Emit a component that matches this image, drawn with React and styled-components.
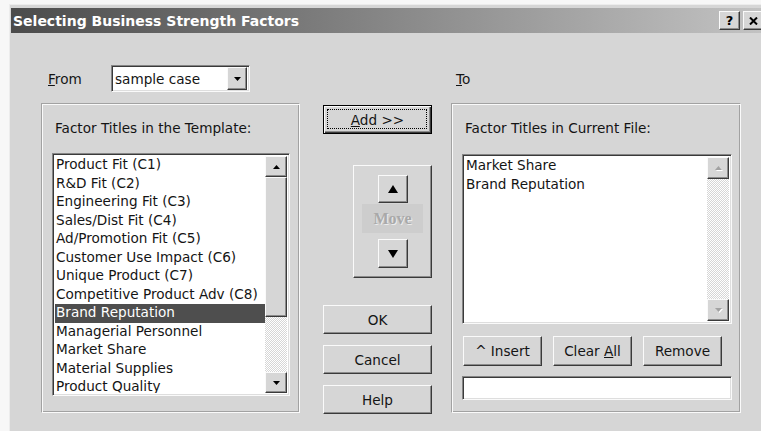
import React from "react";
import styled, { createGlobalStyle, css } from "styled-components";

const FACE = "#d6d6d6";

const GlobalStyle = createGlobalStyle`
  html, body {
    margin: 0;
    padding: 0;
    background: #f7f7f7;
    overflow: hidden;
  }
  body {
    font-family: "DejaVu Sans", Tahoma, sans-serif;
    font-size: 13.6px;
    color: #141414;
  }
  *, *::before, *::after {
    box-sizing: border-box;
  }
`;

const raised = css`
  border: 1px solid;
  border-color: #fafafa #3a3a3a #3a3a3a #fafafa;
  box-shadow: inset -1px -1px 0 #8c8c8c;
`;

const sunken = css`
  border: 1px solid;
  border-color: #858585 #fafafa #fafafa #858585;
  box-shadow: inset 1px 1px 0 #3a3a3a, inset -1px -1px 0 #dedede;
`;

const Arrow = ({ up, w = 7, h = 4, disabled }) => (
  <svg
    width={w}
    height={h}
    viewBox={`0 0 ${w} ${h}`}
    style={disabled ? { filter: "drop-shadow(1px 1px 0 #fff)" } : undefined}
  >
    <polygon
      points={up ? `0,${h} ${w / 2},0 ${w},${h}` : `0,0 ${w},0 ${w / 2},${h}`}
      fill={disabled ? "#a2a2a2" : "#000"}
    />
  </svg>
);

const Window = styled.div`
  margin: 4px 0 0 9px;
  width: 762px;
  height: 427px;
  background: ${FACE};
  border-top: 1px solid #ececec;
  border-left: 1px solid #ececec;
  padding: 3px 0 0 1px;
`;

const TitleBar = styled.div`
  height: 25px;
  display: flex;
  align-items: center;
  padding: 0 7px 0 2px;
  background: linear-gradient(to right, #4b4b4b, #c4c4c4);
`;

const Title = styled.div`
  flex: 1;
  color: #fff;
  font-weight: bold;
  font-size: 14px;
  white-space: nowrap;
`;

const CaptionButtons = styled.div`
  display: flex;
  gap: 3px;
`;

const CaptionButton = styled.div`
  ${raised};
  width: 21px;
  height: 19px;
  background: ${FACE};
  display: grid;
  place-items: center;
  font-weight: bold;
  font-size: 13px;
  color: #000;
`;

const Body = styled.div`
  padding: 32px 0 0 30px;
`;

const TopRow = styled.div`
  display: flex;
  align-items: center;
  height: 27px;
  margin-bottom: 11px;
`;

const FromField = styled.div`
  width: 415px;
  display: flex;
  align-items: center;
  padding-left: 7px;
`;

const Label = styled.span`
  width: ${(p) => (p.$width ? `${p.$width}px` : "auto")};
`;

const Combo = styled.div`
  ${sunken};
  width: 139px;
  height: 27px;
  background: #fff;
  display: flex;
  align-items: center;
  padding: 2px 2px 2px 3px;
`;

const ComboText = styled.span`
  flex: 1;
`;

const DropButton = styled.div`
  ${raised};
  width: 20px;
  height: 23px;
  background: ${FACE};
  display: grid;
  place-items: center;
`;

const MainRow = styled.div`
  display: flex;
  align-items: flex-start;
`;

const GroupBox = styled.div`
  width: ${(p) => p.$width}px;
  height: 310px;
  margin-left: ${(p) => p.$gap || 0}px;
  border: 1px solid;
  border-color: #a2a2a2 #fafafa #fafafa #a2a2a2;
  box-shadow: inset 1px 1px 0 #fafafa, inset -1px -1px 0 #a2a2a2;
  padding: 16px 0 0 10px;
`;

const GroupTitle = styled.div`
  height: 17px;
  line-height: 17px;
  padding-left: 3px;
  margin-bottom: ${(p) => p.$space}px;
  white-space: nowrap;
`;

const ListBox = styled.div`
  ${sunken};
  width: ${(p) => p.$width}px;
  height: ${(p) => p.$height}px;
  background: #fff;
  padding: 2px;
  display: flex;
`;

const Items = styled.div`
  flex: 1;
  overflow: hidden;
`;

const Item = styled.div`
  height: 18.5px;
  line-height: 16.5px;
  padding-left: 1px;
  white-space: nowrap;
  ${(p) =>
    p.$selected &&
    css`
      background: #4e4e4e;
      color: #fff;
    `}
`;

const ScrollBar = styled.div`
  width: 22px;
  display: flex;
  flex-direction: column;
`;

const ScrollButton = styled.div`
  ${raised};
  height: ${(p) => p.$size}px;
  background: ${FACE};
  display: grid;
  place-items: center;
`;

const Thumb = styled.div`
  ${raised};
  height: ${(p) => p.$size}px;
  background: ${FACE};
`;

const Track = styled.div`
  flex: 1;
  background: repeating-conic-gradient(${FACE} 0 25%, #fff 0 50%) 0 0 / 2px 2px;
`;

const Controls = styled.div`
  width: 109px;
  margin-left: 23px;
  padding-top: 2px;
  display: flex;
  flex-direction: column;
`;

const Button = styled.div`
  ${raised};
  position: relative;
  width: ${(p) => p.$width || 109}px;
  height: ${(p) => p.$height || 29}px;
  margin-top: ${(p) => p.$top || 0}px;
  background: ${FACE};
  display: grid;
  place-items: center;
  white-space: nowrap;
  ${(p) =>
    p.$default &&
    css`
      border-color: #000;
      box-shadow: inset 1px 1px 0 #fafafa, inset -1px -1px 0 #3a3a3a,
        inset -2px -2px 0 #8c8c8c;
      &::after {
        content: "";
        position: absolute;
        inset: 3px 4px 4px 3px;
        border: 1px dotted #000;
      }
    `}
`;

const MovePanel = styled.div`
  ${raised};
  width: 79px;
  height: 113px;
  margin: 31px 0 0 30px;
  background: ${FACE};
  padding-top: 9px;
  display: flex;
  flex-direction: column;
  align-items: center;
`;

const ArrowButton = styled.div`
  ${raised};
  width: 30px;
  height: ${(p) => p.$height}px;
  margin-top: ${(p) => p.$top || 0}px;
  background: ${FACE};
  display: grid;
  place-items: center;
`;

const MoveLabel = styled.div`
  width: 61px;
  height: 29px;
  margin-top: 1px;
  background: #cdcdcd;
  display: grid;
  place-items: center;
  font-family: "Liberation Serif", "Times New Roman", serif;
  font-weight: bold;
  font-size: 16px;
  color: #a9a9a9;
  text-shadow: 1px 1px 0 #ececec;
`;

const ButtonRow = styled.div`
  display: flex;
  gap: 11px;
  margin: 12px 0 0 1px;
`;

const TextBox = styled.div`
  ${sunken};
  width: 270px;
  height: 24px;
  margin-top: 10px;
  background: #fff;
`;

const templateTitles = [
  "Product Fit (C1)",
  "R&D Fit (C2)",
  "Engineering Fit (C3)",
  "Sales/Dist Fit (C4)",
  "Ad/Promotion Fit (C5)",
  "Customer Use Impact (C6)",
  "Unique Product (C7)",
  "Competitive Product Adv (C8)",
  "Brand Reputation",
  "Managerial Personnel",
  "Market Share",
  "Material Supplies",
  "Product Quality",
];

const currentTitles = ["Market Share", "Brand Reputation"];

export default function App() {
  return (
    <>
      <GlobalStyle />
      <Window>
        <TitleBar>
          <Title>Selecting Business Strength Factors</Title>
          <CaptionButtons>
            <CaptionButton>?</CaptionButton>
            <CaptionButton>
              <svg width="9" height="8" viewBox="0 0 9 8">
                <path d="M1 0.5 L8 7.5 M8 0.5 L1 7.5" stroke="#000" strokeWidth="2" />
              </svg>
            </CaptionButton>
          </CaptionButtons>
        </TitleBar>

        <Body>
          <TopRow>
            <FromField>
              <Label $width={63}>
                <u>F</u>rom
              </Label>
              <Combo>
                <ComboText>sample case</ComboText>
                <DropButton>
                  <Arrow />
                </DropButton>
              </Combo>
            </FromField>
            <Label>
              <u>T</u>o
            </Label>
          </TopRow>

          <MainRow>
            <GroupBox $width={259}>
              <GroupTitle $space={16}>Factor Titles in the Template:</GroupTitle>
              <ListBox $width={238} $height={243}>
                <Items>
                  {templateTitles.map((t) => (
                    <Item key={t} $selected={t === "Brand Reputation"}>
                      {t}
                    </Item>
                  ))}
                </Items>
                <ScrollBar>
                  <ScrollButton $size={21}>
                    <Arrow up />
                  </ScrollButton>
                  <Thumb $size={140} />
                  <Track />
                  <ScrollButton $size={21}>
                    <Arrow />
                  </ScrollButton>
                </ScrollBar>
              </ListBox>
            </GroupBox>

            <Controls>
              <Button $default>
                <span>
                  <u>A</u>dd &gt;&gt;
                </span>
              </Button>
              <MovePanel>
                <ArrowButton $height={28}>
                  <Arrow up w={10} h={8} />
                </ArrowButton>
                <MoveLabel>Move</MoveLabel>
                <ArrowButton $height={29} $top={6}>
                  <Arrow w={10} h={8} />
                </ArrowButton>
              </MovePanel>
              <Button $top={27}>OK</Button>
              <Button $top={11}>Cancel</Button>
              <Button $top={11}>Help</Button>
            </Controls>

            <GroupBox $width={290} $gap={19}>
              <GroupTitle $space={17}>Factor Titles in Current File:</GroupTitle>
              <ListBox $width={270} $height={170}>
                <Items>
                  {currentTitles.map((t) => (
                    <Item key={t}>{t}</Item>
                  ))}
                </Items>
                <ScrollBar>
                  <ScrollButton $size={22}>
                    <Arrow up disabled />
                  </ScrollButton>
                  <Track />
                  <ScrollButton $size={22}>
                    <Arrow disabled />
                  </ScrollButton>
                </ScrollBar>
              </ListBox>
              <ButtonRow>
                <Button $width={79} $height={30}>
                  ^ Insert
                </Button>
                <Button $width={79} $height={30}>
                  <span>
                    Clear <u>A</u>ll
                  </span>
                </Button>
                <Button $width={79} $height={30}>
                  Remove
                </Button>
              </ButtonRow>
              <TextBox />
            </GroupBox>
          </MainRow>
        </Body>
      </Window>
    </>
  );
}
